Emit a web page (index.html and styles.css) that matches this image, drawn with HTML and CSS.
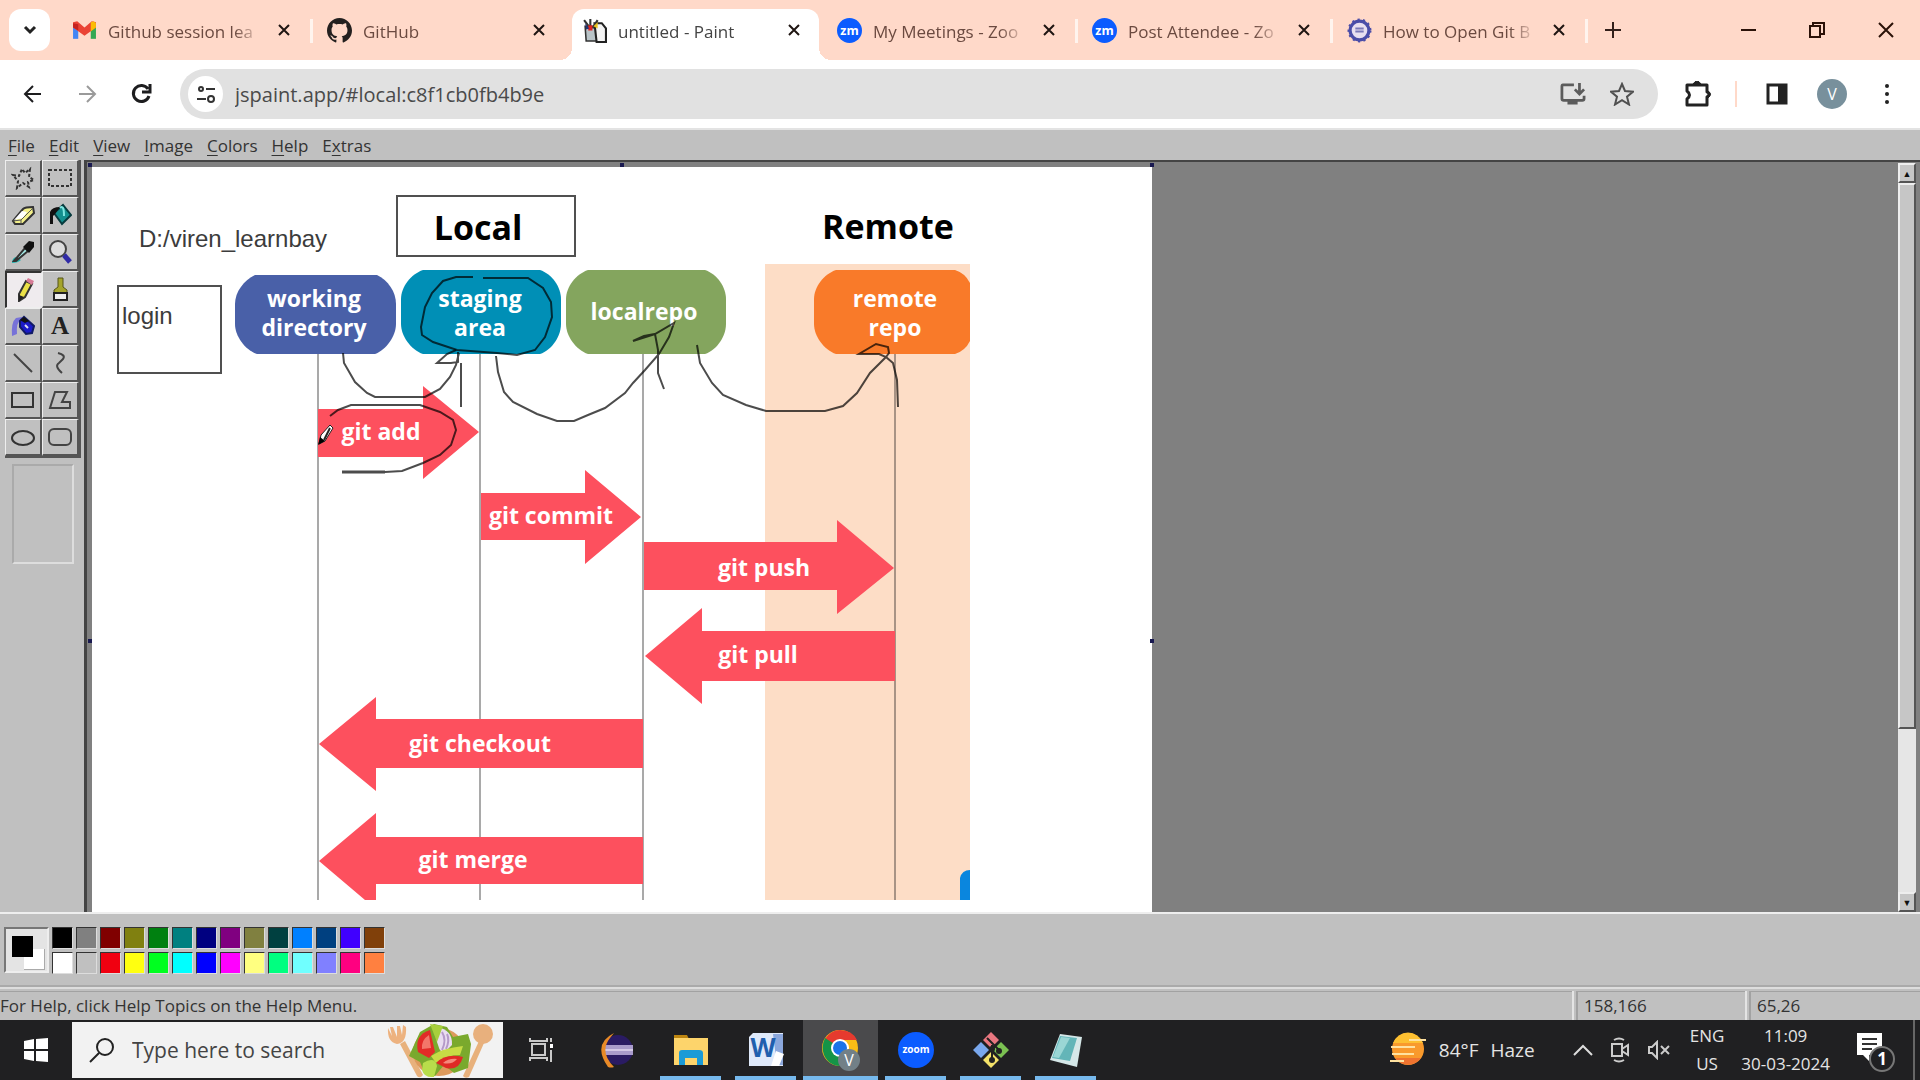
FILE: index.html
```html
<!DOCTYPE html>
<html lang="en">
<head>
<meta charset="utf-8">
<title>untitled - Paint</title>
<link rel="stylesheet" href="styles.css">
</head>
<body>
<header class="tabstrip">
  <button class="tab-search" aria-label="Search tabs"><svg width="14" height="10" viewBox="0 0 14 10"><path d="M2 2l5 5 5-5" fill="none" stroke="#222" stroke-width="3"/></svg></button>
  <nav class="tabs">
    <div class="tab">
      <svg class="favicon" viewBox="0 0 24 24"><path d="M1 20V6h5v14z" fill="#4285f4"/><path d="M18 20V6h5v14z" fill="#34a853"/><path d="M1 4l4-1 7 6 7-6 4 1v5l-11 8L1 9z" fill="#ea4335"/><path d="M18 4l3-1 2 2v4l-5 4z" fill="#fbbc04"/><path d="M1 5l5 1v6L1 9z" fill="#c5221f"/></svg>
      <a class="tab-title" href="#">Github session lea</a><button class="tab-close" aria-label="Close tab"><svg width="12" height="12" viewBox="0 0 12 12"><path d="M1 1l10 10M11 1L1 11"/></svg></button>
    </div>
    <div class="tab next-active">
      <svg class="favicon" viewBox="0 0 16 16"><path fill="#24201f" d="M8 0C3.600 0 0 3.600 0 8c0 3.500 2.300 6.500 5.500 7.600.4.100.5-.2.500-.4v-1.400c-2.200.5-2.700-.9-2.700-.9-.4-.9-.9-1.200-.9-1.200-.7-.5.100-.5.100-.5.800.1 1.200.8 1.200.8.700 1.200 1.900.9 2.300.7.100-.5.300-.9.500-1.100-1.800-.2-3.600-.9-3.600-4 0-.9.300-1.600.8-2.100-.1-.2-.4-1 .1-2.100 0 0 .7-.2 2.200.8.600-.2 1.300-.3 2-.3s1.400.1 2 .3c1.500-1 2.200-.8 2.200-.8.400 1.100.2 1.900.1 2.100.5.600.8 1.300.8 2.100 0 3.100-1.900 3.700-3.700 3.900.3.300.6.800.6 1.500v2.200c0 .2.100.5.600.4C13.700 14.500 16 11.500 16 8c0-4.400-3.600-8-8-8z"/></svg>
      <a class="tab-title" href="#">GitHub</a><button class="tab-close" aria-label="Close tab"><svg width="12" height="12" viewBox="0 0 12 12"><path d="M1 1l10 10M11 1L1 11"/></svg></button>
    </div>
    <div class="tab active">
      <svg class="favicon" viewBox="0 0 24 24"><path d="M3 8h12v14H4z" fill="#b9c4c8" stroke="#333" stroke-width="1.500"/><path d="M12 5h7l4 5v13h-9z" fill="#f4f4f4" stroke="#222" stroke-width="2"/><path d="M2 2l6 8M8 1v8M15 2l-5 8" stroke="#333" stroke-width="2"/><path d="M6 7h4v5H6z" fill="#d22"/><path d="M11 8l4-4v6z" fill="#e8c21c"/><path d="M3 5l4 5-3 1z" fill="#237"/></svg>
      <a class="tab-title" href="#">untitled - Paint</a><button class="tab-close" aria-label="Close tab"><svg width="12" height="12" viewBox="0 0 12 12"><path d="M1 1l10 10M11 1L1 11"/></svg></button>
    </div>
    <div class="tab">
      <svg class="favicon" viewBox="0 0 24 24"><circle cx="12" cy="12" r="12" fill="#0b5cff"/><text x="12" y="16" class="zm">zm</text></svg>
      <a class="tab-title" href="#">My Meetings - Zoo</a><button class="tab-close" aria-label="Close tab"><svg width="12" height="12" viewBox="0 0 12 12"><path d="M1 1l10 10M11 1L1 11"/></svg></button>
    </div>
    <div class="tab">
      <svg class="favicon" viewBox="0 0 24 24"><circle cx="12" cy="12" r="12" fill="#0b5cff"/><text x="12" y="16" class="zm">zm</text></svg>
      <a class="tab-title" href="#">Post Attendee - Zo</a><button class="tab-close" aria-label="Close tab"><svg width="12" height="12" viewBox="0 0 12 12"><path d="M1 1l10 10M11 1L1 11"/></svg></button>
    </div>
    <div class="tab">
      <svg class="favicon" viewBox="0 0 24 24"><circle cx="12" cy="12" r="9" fill="#e8dff0" stroke="#4b4da8" stroke-width="3"/><circle cx="12" cy="12" r="10" fill="none" stroke="#4b4da8" stroke-width="3" stroke-dasharray="2 3"/><path d="M8 10h8M8 13h8" stroke="#7a78b8" stroke-width="2"/></svg>
      <a class="tab-title" href="#">How to Open Git B</a><button class="tab-close" aria-label="Close tab"><svg width="12" height="12" viewBox="0 0 12 12"><path d="M1 1l10 10M11 1L1 11"/></svg></button>
    </div>
  </nav>
  <button class="new-tab" aria-label="New tab"><svg width="16" height="16" viewBox="0 0 16 16"><path d="M8 0v16M0 8h16" stroke="#33201a" stroke-width="2"/></svg></button>
  <div class="window-buttons">
    <button aria-label="Minimize"><svg width="18" height="18" viewBox="0 0 18 18"><path d="M2 9h15" stroke="#2b1208" stroke-width="2"/></svg></button>
    <button aria-label="Restore"><svg width="18" height="18" viewBox="0 0 18 18"><path d="M2 5h10v11H2zM5 5V2h11v11h-4" fill="none" stroke="#2b1208" stroke-width="2"/></svg></button>
    <button aria-label="Close"><svg width="18" height="18" viewBox="0 0 18 18"><path d="M2 2l14 14M16 2L2 16" stroke="#2b1208" stroke-width="2"/></svg></button>
  </div>
</header>

<div class="toolbar">
  <button class="nav-btn" aria-label="Back"><svg width="20" height="20" viewBox="0 0 20 20"><path d="M18 10H3M10 2l-8 8 8 8" fill="none" stroke="#1d1d1f" stroke-width="2"/></svg></button>
  <button class="nav-btn" aria-label="Forward"><svg width="20" height="20" viewBox="0 0 20 20"><path d="M2 10h15M10 2l8 8-8 8" fill="none" stroke="#9a9a9a" stroke-width="2"/></svg></button>
  <button class="nav-btn" aria-label="Reload"><svg width="22" height="22" viewBox="0 0 22 22"><path d="M18 6a8 8 0 1 0 1 7M20 1v8h-8" fill="none" stroke="#1d1d1f" stroke-width="3"/></svg></button>
  <div class="omnibox">
    <button class="site-info" aria-label="Site information"><svg width="20" height="20" viewBox="0 0 20 20"><g fill="none" stroke="#333" stroke-width="2"><circle cx="5" cy="5" r="2"/><path d="M10 5h9M1 15h9"/><circle cx="15" cy="15" r="3"/></g></svg></button>
    <input class="url" aria-label="Address" value="jspaint.app/#local:c8f1cb0fb4b9e">
    <button aria-label="Install"><svg width="26" height="24" viewBox="0 0 28 26"><path d="M15 3H3q-1 0-1 2v13q0 2 2 2h20q2 0 2-2v-3M8 23h11M21 1v11M16 8l5 5 5-5" fill="none" stroke="#5b5b5b" stroke-width="3"/></svg></button>
    <button aria-label="Bookmark"><svg width="24" height="24" viewBox="0 0 24 24"><path d="M12 2l3 7 8 .7-6 5 2 7.800-7-4.300-7 4.300 2-7.800-6-5 8-.7z" fill="none" stroke="#505050" stroke-width="2"/></svg></button>
  </div>
  <div class="extensions">
    <button aria-label="Extensions"><svg width="28" height="26" viewBox="0 0 28 26"><path d="M3 4h20v7q4 2 0 5v8H3v-6q5-4 0-8z" fill="none" stroke="#222" stroke-width="3" stroke-linejoin="round"/><path d="M9 3q4-6 8 0M24 10q5 3 0 7" fill="#222" stroke="#222"/></svg></button>
    <span class="divider"></span>
    <button aria-label="Side panel"><svg width="22" height="24" viewBox="0 0 22 24"><path d="M2 3h18v18H2z" fill="none" stroke="#222" stroke-width="3"/><path d="M12 3h9v18h-9z" fill="#222"/></svg></button>
    <button class="avatar" aria-label="Profile">V</button>
    <button aria-label="Menu"><svg width="6" height="24" viewBox="0 0 6 24"><g fill="#222"><circle cx="3" cy="4" r="2"/><circle cx="3" cy="12" r="2"/><circle cx="3" cy="20" r="2"/></g></svg></button>
  </div>
</div>

<main class="paint">
  <nav class="menubar">
    <button><u>F</u>ile</button><button><u>E</u>dit</button><button><u>V</u>iew</button><button><u>I</u>mage</button><button><u>C</u>olors</button><button><u>H</u>elp</button><button>E<u>x</u>tras</button>
  </nav>
  <div class="workspace">
    <aside class="toolbox">
      <div class="tools">
        <button aria-label="Free-Form Select"><svg viewBox="0 0 24 24"><path d="M2 9l6 1 3-7 3 4 5-4-1 8 5 3-6 2 1 5-6-4-6 5 1-7z" fill="none" stroke="#333" stroke-width="2" stroke-dasharray="3 2"/></svg></button>
        <button aria-label="Select"><svg viewBox="0 0 24 24"><path d="M1 4h22v16H1z" fill="none" stroke="#333" stroke-width="2" stroke-dasharray="3 2"/></svg></button>
        <button aria-label="Eraser"><svg viewBox="0 0 24 24"><path d="M2 18l10-12q2-2 10-2l1 6-11 11H4z" fill="#f3f08a" stroke="#333" stroke-width="2"/><path d="M3 17l9-2 4-6-5-1z" fill="#fff"/><path d="M2 18l8-1 12-12M10 17v4" fill="none" stroke="#555"/></svg></button>
        <button aria-label="Fill"><svg viewBox="0 0 24 24"><path d="M6 10L15 2l8 10-9 9z" fill="#138f8e" stroke="#063b3e" stroke-width="2"/><path d="M2 21V9q2-5 10-5l-5 7-2 2v8z" fill="#111"/><path d="M12 5q4-4 4 8" fill="none" stroke="#7fe6e0" stroke-width="2"/></svg></button>
        <button aria-label="Pick Color"><svg viewBox="0 0 24 24"><path d="M1 23q0-5 4-6l5 3q-3 3-9 3z" fill="#20b5b0"/><path d="M3 21L14 8l3 3L5 21z" fill="#a7eeea" stroke="#333" stroke-width="2"/><path d="M12 7l6-6 5 1v5l-5 6z" fill="#111"/></svg></button>
        <button aria-label="Magnifier"><svg viewBox="0 0 24 24"><circle cx="10" cy="9" r="8" fill="#ddd" stroke="#444" stroke-width="2"/><path d="M16 15l6 7" stroke="#302ba6" stroke-width="5"/></svg></button>
        <button class="selected" aria-label="Pencil"><svg viewBox="0 0 24 24"><path d="M7 16L14 3l6 3-7 13-6 4z" fill="#eae047" stroke="#333" stroke-width="2"/><path d="M14 3l2-3 6 3-2 4z" fill="#d77b97"/><path d="M7 17l5 2-5 4z" fill="#222"/></svg></button>
        <button aria-label="Brush"><svg viewBox="0 0 24 24"><path d="M10 1h5v9l4 3v3H6v-3l4-3z" fill="#a5a42b" stroke="#55551a"/><path d="M6 16h13v7H6z" fill="#eee" stroke="#222" stroke-width="2"/></svg></button>
        <button aria-label="Airbrush"><svg viewBox="0 0 24 24"><path d="M1 22Q0 8 5 4l6-1-1 3q-5 2-4 14z" fill="#7772d8"/><path d="M9 7l4-4 10 9-2 7-6 1-6-7z" fill="#1b1bc8" stroke="#111a66" stroke-width="2"/><path d="M9 6l4-3 5 4-4 2z" fill="#111"/><path d="M14 11l3 3" stroke="#dde" stroke-width="2"/></svg></button>
        <button aria-label="Text"><span class="text-tool">A</span></button>
        <button aria-label="Line"><svg viewBox="0 0 24 24"><path d="M3 3l18 18" stroke="#444" stroke-width="2"/></svg></button>
        <button aria-label="Curve"><svg viewBox="0 0 24 24"><path d="M10 2q8 2 5 6l-4 4q-5 3 3 10" fill="none" stroke="#444" stroke-width="2"/></svg></button>
        <button aria-label="Rectangle"><svg viewBox="0 0 24 24"><path d="M1 5h21v14H1z" fill="none" stroke="#333" stroke-width="2"/></svg></button>
        <button aria-label="Polygon"><svg viewBox="0 0 24 24"><path d="M7 4h12l-5 10h8v6H2z" fill="none" stroke="#444" stroke-width="2"/></svg></button>
        <button aria-label="Ellipse"><svg viewBox="0 0 24 24"><ellipse cx="12" cy="13" rx="11" ry="7" fill="none" stroke="#333" stroke-width="2"/></svg></button>
        <button aria-label="Rounded Rectangle"><svg viewBox="0 0 24 24"><rect x="1" y="4" width="22" height="16" rx="5" fill="none" stroke="#444" stroke-width="2"/></svg></button>
      </div>
      <div class="tool-options"></div>
    </aside>
    <section class="canvas-area">
      <svg class="canvas" width="1066" height="752" viewBox="88 163 1066 752" role="img" aria-label="Drawing of the Git workflow">
        <path d="M92 167h1060v748H92z" fill="#fff"/>
        <g fill="#191950"><path d="M88 163h4v4h-4zM620 163h4v4h-4zM1150 163h4v4h-4zM88 639h4v4h-4zM1150 639h4v4h-4z"/></g>
        <path d="M765 264h205v636H765z" fill="#fdddc6"/>
        <g stroke="#a9a9a9" stroke-width="2"><path d="M318 354v546M480 354v546M643 354v546"/><path d="M895 354v546" stroke="#a89385"/></g>
        <g fill="none" stroke="#505050" stroke-width="2"><path d="M397 196h178v60H397zM118 286h103v87H118z"/></g>
        <path d="M255 275h122c11 5 19 17 19 29v20c0 12-10 26-21 30H257c-12-4-22-18-22-30v-20c0-12 9-24 20-29z" fill="#4960a8"/>
        <path d="M423 270h117c12 4 21 17 21 29v25c0 12-9 26-21 30H423c-12-4-22-18-22-30v-25c0-12 10-25 22-29z" fill="#008fb6"/>
        <path d="M588 270h117c12 4 21 17 21 29v25c0 12-9 26-21 30H588c-12-4-22-18-22-30v-25c0-12 10-25 22-29z" fill="#84a55e"/>
        <path d="M836 270h119q10 3 15 13v58q-5 10-15 13H836c-12-4-22-18-22-30v-25c0-12 10-25 22-29z" fill="#f97a29"/>
        <path d="M960 900v-22q2-8 10-8v30z" fill="#0a86de"/>
        <g fill="#fd505e">
          <path d="M318 409h105v-23l56 46-56 47v-22H318z"/>
          <path d="M481 493h104v-23l56 47-56 47v-24H481z"/>
          <path d="M644 542h193v-22l57 48-57 46v-24H644z"/>
          <path d="M895 631H702v-23l-57 48 57 48v-23h193z"/>
          <path d="M643 719H376v-22l-57 47 57 47v-23h267z"/>
          <path d="M643 837H376v-24l-57 48 46 39h11v-16h267z"/>
        </g>
        <g class="heading"><text x="478" y="240">Local</text><text x="888" y="239">Remote</text></g>
        <g class="note"><text x="139" y="247">D:/viren_learnbay</text><text x="122" y="324">login</text></g>
        <g class="label">
          <text x="314" y="307">working</text><text x="314" y="336">directory</text>
          <text x="480" y="307">staging</text><text x="480" y="336">area</text>
          <text x="644" y="320">localrepo</text>
          <text x="895" y="307">remote</text><text x="895" y="336">repo</text>
          <text x="381" y="440">git add</text><text x="551" y="524">git commit</text><text x="764" y="576">git push</text><text x="758" y="663">git pull</text><text x="480" y="752">git checkout</text><text x="473" y="868">git merge</text>
        </g>
        <g class="scribble">
          <path d="M343 353l1 10 11 19 12 11 8 4h50l15-8 10-12 6-12 3-12M456 350l-9 4-10 9 14 0 7-1v-10M461 363v44"/>
          <path d="M473 277h-17l-13 4-11 12-7 14-4 20 1 8 11 7 24 8 40 3 20 2 18-5 10-13 7-20-1-15-8-14-15-10h-45"/>
          <path d="M496 356l2 16 6 20 9 10 24 12 20 7h17l14-6 17-7 20-15 8-10 12-13 14-16 10-17 5-14-19 11-22 7 11-5 11-2 3 16v23l6 16"/>
          <path d="M697 345l3 18 12 20 11 12 23 10 20 6h59l18-5 14-13 13-20 16-16-7-3h-20l17-10 12 3 1 6-3 4 7 6 4 17 1 27"/>
          <path d="M330 416l8-6 13-5h69l20 7 13 8 3 10-5 15-11 10-17 8-21 8-17 1"/><path d="M342 472h43" stroke-width="3"/>
        </g>
        <path d="M319 444l2-9 9-10 3 3-8 13z" fill="#fff" stroke="#222" stroke-width="1"/><path d="M318 445l2-8 5 4z" fill="#000"/><path d="M324 440l6-12" stroke="#222" stroke-width="2"/>
      </svg>
      <div class="scrollbar"><button aria-label="Scroll up">▲</button><div class="track"><div class="thumb"></div></div><button aria-label="Scroll down">▼</button></div>
    </section>
  </div>
  <div class="colorbox">
    <div class="current"><span class="bg-color"></span><span class="fg-color"></span></div>
    <div class="palette">
      <button class="c1" aria-label="Black"></button><button class="c2" aria-label="Gray"></button><button class="c3" aria-label="Maroon"></button><button class="c4" aria-label="Olive"></button><button class="c5" aria-label="Green"></button><button class="c6" aria-label="Teal"></button><button class="c7" aria-label="Navy"></button><button class="c8" aria-label="Purple"></button><button class="c9" aria-label="Khaki"></button><button class="c10" aria-label="Dark teal"></button><button class="c11" aria-label="Azure"></button><button class="c12" aria-label="Steel blue"></button><button class="c13" aria-label="Violet"></button><button class="c14" aria-label="Brown"></button>
      <button class="c15" aria-label="White"></button><button class="c16" aria-label="Silver"></button><button class="c17" aria-label="Red"></button><button class="c18" aria-label="Yellow"></button><button class="c19" aria-label="Lime"></button><button class="c20" aria-label="Cyan"></button><button class="c21" aria-label="Blue"></button><button class="c22" aria-label="Magenta"></button><button class="c23" aria-label="Light yellow"></button><button class="c24" aria-label="Spring green"></button><button class="c25" aria-label="Light cyan"></button><button class="c26" aria-label="Periwinkle"></button><button class="c27" aria-label="Pink"></button><button class="c28" aria-label="Orange"></button>
    </div>
  </div>
  <div class="statusbar"><span class="help">For Help, click Help Topics on the Help Menu.</span><span class="position">158,166</span><span class="size">65,26</span></div>
</main>

<footer class="taskbar">
  <button class="start" aria-label="Start"><svg width="26" height="26" viewBox="0 0 26 26"><path d="M1 4l10-2v10H1zM13 2l12-1v11H13zM1 14h10v10L1 22zM13 14h12v11l-12-1z" fill="#fff"/></svg></button>
  <label class="search">
    <svg width="28" height="28" viewBox="0 0 28 28"><circle cx="17" cy="11" r="8" fill="none" stroke="#222" stroke-width="2"/><path d="M11 17L2 26" stroke="#222" stroke-width="2"/></svg>
    <input aria-label="Search" placeholder="Type here to search">
    <svg width="108" height="56" viewBox="0 0 108 56">
      <path d="M13 22l5-3 18 34q-3 4-6 1z" fill="#e8b17c"/><path d="M1 6q-1 14 9 16 10-1 9-17l-3-2-1 10-2-9-3 0 0 11-4-10-3 0 2 9z" fill="#edb27f"/>
      <path d="M92 19l5 2-15 34q-4 2-6-1z" fill="#e8b17c"/><circle cx="96" cy="12" r="10" fill="#e8b07d"/>
      <ellipse cx="52" cy="30" rx="26" ry="24" fill="#dd9a5c"/>
      <path d="M22 34l11-24 14-8 13 3 6 10 15-3 3 10-3 24-14 5-10-8-9 11-10-2-5-12z" fill="#7aa92d"/>
      <path d="M31 30q-4-17 12-22l5 22-6 6z" fill="#e22b27"/><path d="M35 27q-1-9 7-14l2 13z" fill="#f3776a"/>
      <path d="M50 5q16 3 15 18l-9 9q-9-10-6-27z" fill="#e9ddf0"/><path d="M55 10q5 8 0 18M60 12q3 6-1 15" stroke="#b59ac9" fill="none" stroke-width="2"/>
      <path d="M44 34q12-8 32-10l-3 9q-14 0-24 8z" fill="#c7dc45"/><path d="M49 41q10-10 27-6-4 14-17 11z" fill="#e02a25"/><path d="M56 41q6-5 14-4-5 6-14 4z" fill="#f5897c"/>
      <path d="M36 41q12-7 14 3l-3 11q-10 1-12-7z" fill="#b8dd4b"/><path d="M43 2l13 2-6 16z" fill="#a8cf3c"/>
    </svg>
  </label>
  <nav class="apps">
    <button aria-label="Task View"><svg width="28" height="28" viewBox="0 0 28 28"><g fill="none" stroke="#c9c9c9" stroke-width="2"><path d="M5 8h13v11H5zM3 2v3h17V2M3 25v-3h17v3M24 2v4M24 14v12"/></g><path d="M23 8h3v4h-3z" fill="#fff"/></svg></button>
    <button aria-label="Eclipse"><svg width="38" height="38" viewBox="0 0 38 38"><circle cx="21" cy="19" r="15" fill="#2a1b63"/><path d="M6 14h30v10H6z" fill="#a99bcb"/><path d="M6 19h30" stroke="#d3c8e6" stroke-width="2"/><path d="M17 2Q-5 13 11 36q3 1 6 0-15-15-4-29z" fill="#e88a27"/></svg></button>
    <button class="open" aria-label="File Explorer"><svg width="36" height="34" viewBox="0 0 36 34"><path d="M1 2h13l2 4H1z" fill="#bd8510"/><path d="M1 5h34v27H1z" fill="#fdd46b"/><path d="M6 32V20q0-3 3-3h17q4 0 4 3v12h-6v-7H12v7z" fill="#1b9bd7"/></svg></button>
    <button class="open" aria-label="Word"><svg width="36" height="36" viewBox="0 0 36 36"><path d="M5 1h30v33H1V5z" fill="#dfe9fa"/><path d="M25 2h10v31h-6z" fill="#8ba7dc"/><path d="M28 19l8 3-5 12h-8z" fill="#fff"/><text x="15" y="25" class="word">W</text></svg></button>
    <button class="open current-app" aria-label="Chrome"><svg width="40" height="44" viewBox="0 0 40 44"><circle cx="19" cy="20" r="18" fill="#f9bc15"/><path d="M19 20L4 11Q10 2 19 2q12 0 17 10H19z" fill="#e63a2e"/><path d="M4 10q-6 13 3 23 5 5 12 5l7-14z" fill="#159447"/><circle cx="19" cy="20" r="9" fill="#fff"/><circle cx="19" cy="20" r="7" fill="#1a73e8"/><circle cx="28" cy="32" r="11" fill="#728087"/><text x="28" y="38" class="profile">V</text></svg></button>
    <button class="open" aria-label="Zoom"><svg width="38" height="38" viewBox="0 0 38 38"><circle cx="19" cy="19" r="18" fill="#0b5cff"/><text x="19" y="22" class="zoom">zoom</text></svg></button>
    <button class="open" aria-label="Git"><svg width="38" height="38" viewBox="0 0 38 38"><path d="M19 1l8 8-8 8-8-8z" fill="#e97780"/><path d="M9 11l8 8-8 8-8-8z" fill="#79a7ed"/><path d="M29 11l8 8-8 8-8-8z" fill="#7bc152"/><path d="M19 21l8 8-8 8-8-8z" fill="#f4e269"/><path d="M15 7l12 12M20 14v17" stroke="#222" stroke-width="2"/><g fill="#222"><circle cx="20" cy="18" r="3"/><circle cx="20" cy="29" r="3"/><circle cx="27" cy="20" r="3"/></g></svg></button>
    <button class="open" aria-label="Notepad"><svg width="36" height="36" viewBox="0 0 36 36"><path d="M12 2l22 3-5 30L2 28z" fill="#d5e7e8"/><path d="M12 4l17 2-7 23L4 26z" fill="#63b5b8"/><path d="M13 5l9 1-11 20-6-1z" fill="#9ad6d5"/></svg></button>
  </nav>
  <div class="tray">
    <button class="weather"><svg width="38" height="38" viewBox="0 0 38 38"><circle cx="19" cy="18" r="16" fill="#f99a2c"/><path d="M4 12a16 16 0 0 1 30 0z" fill="#fdc031"/><path d="M6 27a16 16 0 0 0 26 0z" fill="#ef7330"/><path d="M20 9h17M2 16h24M3 23h22M1 30h14" stroke="#ffe2a0" stroke-width="2"/></svg><span>84°F</span><span>Haze</span></button>
    <button aria-label="Hidden icons"><svg width="20" height="14" viewBox="0 0 20 14"><path d="M1 12l9-9 9 9" fill="none" stroke="#ddd" stroke-width="2"/></svg></button>
    <button aria-label="Meet now"><svg width="20" height="26" viewBox="0 0 20 26"><path d="M2 7h10v12H2zM12 12l6-4v10l-6-4M4 3q5-3 10 0M4 23q5 3 10 0" fill="none" stroke="#ccc" stroke-width="2"/></svg></button>
    <button aria-label="Sound muted"><svg width="24" height="20" viewBox="0 0 24 20"><path d="M2 7h3l5-5v16l-5-5H2zM14 6l8 8M22 6l-8 8" fill="none" stroke="#ccc" stroke-width="2"/></svg></button>
    <button class="lang">ENG<br>US</button>
    <button class="clock">11:09<br>30-03-2024</button>
    <button class="notify" aria-label="1 notification"><svg width="40" height="44" viewBox="0 0 40 44"><path d="M2 2h25v22H14v6l-6-6H2z" fill="#fff"/><path d="M7 8h15M7 13h15M7 18h10" stroke="#333" stroke-width="2"/><circle cx="27" cy="28" r="12" fill="#202022" stroke="#777" stroke-width="2"/><text x="27" y="34" class="count">1</text></svg></button>
  </div>
</footer>
</body>
</html>
```
FILE: styles.css
```css
* { box-sizing: border-box; }
body {
  margin: 0;
  height: 100vh;
  display: flex;
  flex-direction: column;
  overflow: hidden;
  font-family: "Open Sans", "Noto Sans", sans-serif;
  font-size: 17px;
  color: #333;
}
button, input { font: inherit; color: inherit; border: 0; background: none; padding: 0; margin: 0; }
button { display: flex; align-items: center; justify-content: center; flex: none; white-space: nowrap; }
svg { display: block; flex: none; }

/* Tab strip */
.tabstrip { display: flex; align-items: center; height: 60px; flex: none; background: #ffd9c9; padding-left: 9px; }
.tab-search { width: 41px; height: 42px; border-radius: 12px; background: #fff; margin-right: 8px; }
.tabs { display: flex; flex: 0 1 1530px; min-width: 0; align-self: stretch; }
.tab { position: relative; flex: 1 1 0; min-width: 0; display: flex; align-items: center; padding: 0 18px 0 14px; gap: 11px; color: #6b4a40; }
.tab::after { content: ""; position: absolute; right: 0; top: 19px; width: 3px; height: 24px; background: #fff4ee; }
.tab.next-active::after, .tab.active::after { display: none; }
.favicon { width: 25px; height: 25px; }
.tab-title { flex: 1; min-width: 0; color: inherit; text-decoration: none; white-space: nowrap; overflow: hidden; padding-top: 3px; -webkit-mask-image: linear-gradient(90deg, #000 82%, transparent); mask-image: linear-gradient(90deg, #000 82%, transparent); }
.tab-close { width: 22px; height: 22px; }
.tab-close path { stroke: #1f1512; stroke-width: 2; }
.tab.active { margin: 9px 4px 0; flex-basis: -8px; padding: 0 14px 9px 10px; background: #fff; border-radius: 12px 12px 0 0; color: #444; }
.tab.active::before { content: ""; position: absolute; left: -12px; right: -12px; bottom: 0; height: 12px; background: radial-gradient(circle at 0 0, transparent 12px, #fff 12px) left / 12px 12px no-repeat, radial-gradient(circle at 100% 0, transparent 12px, #fff 12px) right / 12px 12px no-repeat; }
.new-tab { width: 50px; height: 40px; }
.window-buttons { display: flex; margin-left: auto; }
.window-buttons button { width: 69px; height: 60px; }

/* Browser toolbar */
.toolbar { display: flex; align-items: center; height: 70px; flex: none; background: #fff; border-bottom: 2px solid #e3e3e3; padding-left: 6px; }
.nav-btn { width: 54px; height: 44px; }
.omnibox { flex: 1; display: flex; align-items: center; gap: 24px; height: 50px; border-radius: 25px; background: #e1e1e1; margin-left: 12px; padding: 0 24px 0 8px; }
.site-info { width: 35px; height: 36px; border-radius: 50%; background: #fff; }
.url { flex: 1; min-width: 0; font-size: 20px; color: #4a4a4a; margin-left: -12px; }
.extensions { display: flex; align-items: center; gap: 29px; padding: 0 30px 0 26px; }
.divider { width: 2px; height: 26px; background: #ffd9c9; margin-left: -6px; }
.avatar { width: 30px; height: 30px; border-radius: 50%; background: #78909c; color: #fff; font-size: 16px; }
.extensions .avatar { margin-right: 8px; }

/* Paint application */
.paint { flex: 1; min-height: 0; display: flex; flex-direction: column; background: #c0c0c0; }
.menubar { display: flex; gap: 14px; height: 30px; flex: none; padding-left: 8px; }
.menubar button { font-size: 17px; }
.menubar u { text-underline-offset: 3px; }
.workspace { flex: 1; min-height: 0; display: flex; }
.toolbox { width: 84px; flex: none; padding-left: 5px; }
.tools { display: grid; grid-template-columns: repeat(2, 37px); grid-auto-rows: 37px; width: 76px; border-right: 2px solid #555; border-bottom: 2px solid #555; }
.tools button { border: 1px solid; border-color: #eee #555 #555 #eee; border-width: 1px 2px 2px 1px; }
.tools button.selected { background: #efebee; border-color: #333 #eee #eee #333; border-width: 2px 1px 1px 2px; }
.tools svg { width: 24px; height: 24px; }
.text-tool { font: bold 25px "Liberation Serif", serif; color: #222; }
.tool-options { width: 62px; height: 100px; margin: 6px 0 0 7px; border: 2px solid; border-color: #aaa #ddd #ddd #aaa; }
.canvas-area { flex: 1; min-width: 0; display: flex; justify-content: space-between; background: #808080; border: solid #444; border-width: 2px 0 0 3px; overflow: hidden; padding: 1px 4px 0 1px; }
.scrollbar { width: 18px; flex: none; display: flex; flex-direction: column; background: #e6e6e6; }
.scrollbar button, .thumb { background: #c6c6c6; border: 2px solid; border-color: #eee #555 #555 #eee; }
.scrollbar button { height: 20px; font-size: 9px; line-height: 9px; color: #111; }
.track { flex: 1; }
.thumb { height: 77%; }

.colorbox { display: flex; height: 75px; flex: none; border-top: 2px solid #eee; border-bottom: 2px solid #aaa; padding: 13px 4px; gap: 3px; }
.current { position: relative; width: 45px; height: 46px; background: #e4e4e4; border: 2px solid; border-color: #777 #eee #eee #777; }
.fg-color, .bg-color { position: absolute; width: 21px; height: 21px; }
.fg-color { left: 6px; top: 7px; background: #000; }
.bg-color { left: 18px; top: 20px; background: #fff; border-right: 1px solid #aaa; border-bottom: 1px solid #aaa; }
.palette { display: grid; grid-template-columns: repeat(14, 21px); grid-auto-rows: 22px; gap: 3px; }
.palette button { border: 1px solid; border-color: #333 #ddd #ddd #333; }
.c1 { background: #000; } .c2 { background: #808080; } .c3 { background: #800000; } .c4 { background: #808010; } .c5 { background: #008010; } .c6 { background: #008080; } .c7 { background: #000080; }
.c8 { background: #800080; } .c9 { background: #808040; } .c10 { background: #004040; } .c11 { background: #0080ff; } .c12 { background: #004080; } .c13 { background: #4000ff; } .c14 { background: #80400a; }
.c15 { background: #fff; } .c16 { background: #c0c0c0; } .c17 { background: #f00010; } .c18 { background: #ffff10; } .c19 { background: #00ff20; } .c20 { background: #00ffff; } .c21 { background: #0000ff; }
.c22 { background: #ff00ff; } .c23 { background: #ffff80; } .c24 { background: #00ff80; } .c25 { background: #70ffff; } .c26 { background: #8080ff; } .c27 { background: #ff0080; } .c28 { background: #ff8040; }

.statusbar { display: flex; gap: 4px; height: 33px; flex: none; border-top: 2px solid #ddd; padding-top: 2px; }
.statusbar span { border: solid #a2a2a2; border-width: 1px 0 0 2px; box-shadow: 2px 0 #e4e4e4; line-height: 28px; font-size: 17px; padding-left: 6px; }
.statusbar .help { flex: 1; padding-left: 0; border-left-width: 0; }
.position { width: 169px; }
.size { width: 171px; }

/* Drawing text */
.heading { font: bold 34px "Open Sans", sans-serif; fill: #000; text-anchor: middle; }
.label { font: bold 23px "Open Sans", sans-serif; fill: #fff; text-anchor: middle; }
.note { font: 24px "Liberation Sans", sans-serif; fill: #3c3c3c; }
.scribble { fill: none; stroke: #000; stroke-opacity: .7; stroke-width: 2; }

/* Taskbar */
.taskbar { display: flex; align-items: stretch; height: 60px; flex: none; background: #202022; color: #e4e4e4; }
.start { width: 72px; }
.search { display: flex; align-items: center; flex: 0 1 431px; min-width: 0; margin: 2px 0; background: #f2f2f2; padding: 0 8px 0 16px; gap: 16px; color: #333; }
.search input { flex: 1; min-width: 0; font-size: 21px; }
.search input::placeholder { color: #444; opacity: 1; }
.apps { display: flex; }
.apps button { position: relative; width: 75px; }
.apps .open::after { content: ""; position: absolute; left: 7px; right: 7px; bottom: 0; height: 4px; background: #76b9ed; }
.apps .current-app { background: #4a4a4c; }
.apps .current-app::after { left: 0; right: 0; }
.tray { display: flex; align-items: center; margin-left: auto; gap: 17px; border-right: 2px solid #666; margin-right: 5px; }
.weather { font-size: 19px; gap: 12px; margin-right: 21px; }
.lang, .clock { font-size: 17px; line-height: 28px; text-align: center; }
.lang { margin-left: 2px; }
.notify { margin: 6px 18px 0 8px; }
.zm { font: bold 12px "Open Sans", sans-serif; fill: #fff; text-anchor: middle; }
.word { font: bold 26px "Open Sans", sans-serif; fill: #1f5fae; text-anchor: middle; }
.profile { font: 16px "Open Sans", sans-serif; fill: #fff; text-anchor: middle; }
.zoom { font: bold 10px "Open Sans", sans-serif; fill: #fff; text-anchor: middle; }
.count { font: bold 17px "Open Sans", sans-serif; fill: #fff; text-anchor: middle; }
```
